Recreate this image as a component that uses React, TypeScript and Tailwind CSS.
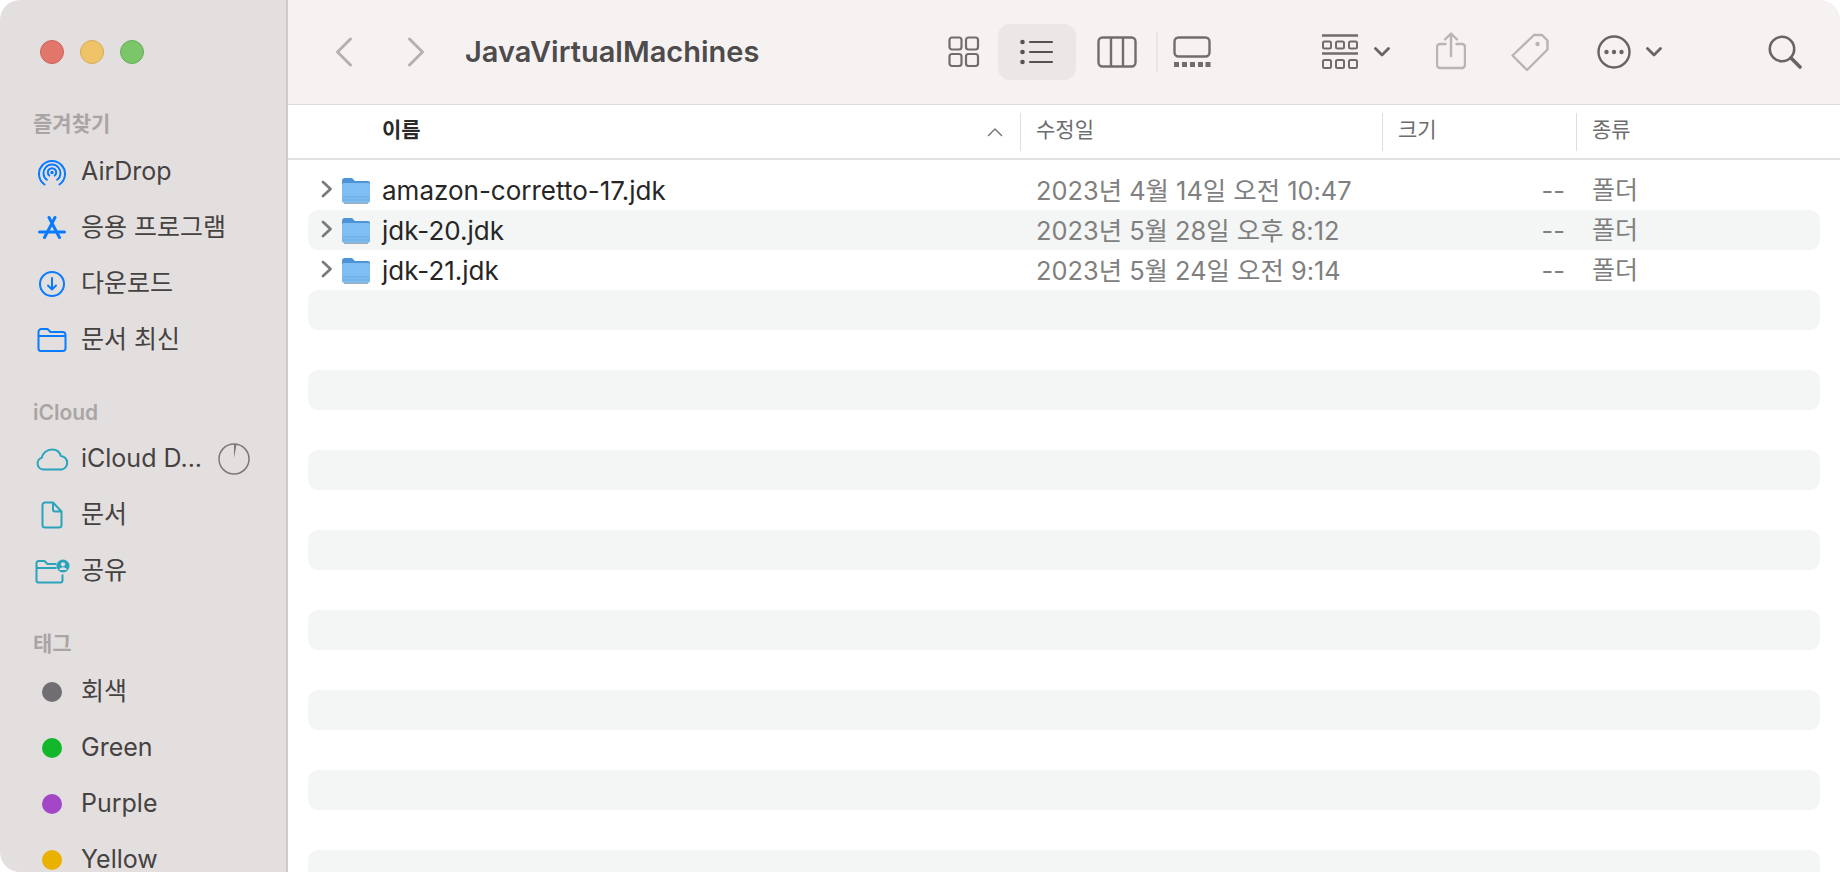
const KO = "font-['Inter','Noto_Sans_CJK_KR',sans-serif]";

const BLUE = "#0a7aff";
const TEAL = "#2aa3bd";

function AirDropIcon() {
  return (
    <svg width="28" height="27" viewBox="0 0 28 27" fill="none" stroke={BLUE} strokeWidth="2" strokeLinecap="round">
      <path d="M6.500 25.500a13 13 0 1 1 15 0" />
      <path d="M8.800 20.800a8.500 8.500 0 1 1 10.400 0" />
      <path d="M11.300 16.600a4.200 4.200 0 1 1 5.400 0" />
      <circle cx="14" cy="13.500" r="1.700" fill={BLUE} stroke="none" />
    </svg>
  );
}

function AppsIcon() {
  return (
    <svg width="28" height="24" viewBox="0 0 28 24" fill="none" stroke={BLUE} strokeLinecap="round">
      <path d="M11 1.500L21.500 21.500M17 1.500L6.500 21.500" strokeWidth="3" />
      <path d="M1.500 16h25" strokeWidth="3" />
    </svg>
  );
}

function DownloadIcon() {
  return (
    <svg width="28" height="28" viewBox="0 0 28 28" fill="none" stroke={BLUE} strokeWidth="2" strokeLinecap="round" strokeLinejoin="round">
      <circle cx="14" cy="14" r="12" />
      <path d="M14 8v11.500M10 15.500l4 4 4-4" />
    </svg>
  );
}

function FolderIcon({ color }: { color: string }) {
  return (
    <svg width="30" height="24" viewBox="0 0 30 24" fill="none" stroke={color} strokeWidth="2" strokeLinejoin="round">
      <path d="M1.500 4a3 3 0 0 1 3-3h6l3 3h12a3 3 0 0 1 3 3v13.500a2.500 2.500 0 0 1-2.500 2.500h-22a2.500 2.500 0 0 1-2.500-2.500z" />
      <path d="M1.500 8h27" />
    </svg>
  );
}

function CloudIcon() {
  return (
    <svg width="33" height="23" viewBox="0 0 33 23" fill="none" stroke={TEAL} strokeWidth="2" strokeLinejoin="round">
      <path d="M7.500 21.500a6 6 0 0 1-1.800-11.700C7 5 11 1.500 16 1.500c4.500 0 7.800 2.800 8.800 6.500a6.800 6.800 0 0 1 .7 13.500z" />
    </svg>
  );
}

function DocIcon() {
  return (
    <svg width="22" height="28" viewBox="0 0 22 28" fill="none" stroke={TEAL} strokeWidth="2" strokeLinejoin="round">
      <path d="M4 1.500h8l8.500 9V24a2.500 2.500 0 0 1-2.500 2.500H4A2.500 2.500 0 0 1 1.500 24V4A2.500 2.500 0 0 1 4 1.500z" />
      <path d="M12 1.500v7a2 2 0 0 0 2 2h6.500" />
    </svg>
  );
}

function SharedIcon() {
  return (
    <svg width="35" height="25" viewBox="0 0 35 25" fill="none" stroke={TEAL} strokeWidth="2" strokeLinejoin="round">
      <path d="M1.500 4a2 2 0 0 1 2-2h6l3 3h9" />
      <path d="M1.500 9h20" />
      <path d="M1.500 4v17.500a2 2 0 0 0 2 2h22a2 2 0 0 0 2-2v-6" />
      <circle cx="28" cy="7" r="6.500" fill={TEAL} stroke="none" />
      <circle cx="28" cy="5.300" r="2.100" fill="#e4dfdf" stroke="none" />
      <path d="M24 11c.7-1.800 2.200-2.700 4-2.700s3.300.9 4 2.700z" fill="#e4dfdf" stroke="none" />
    </svg>
  );
}

function ProgressIcon() {
  return (
    <svg width="32" height="32" viewBox="0 0 32 32" className="ml-auto mr-[36px]">
      <circle cx="16" cy="16" r="15" fill="none" stroke="#7c7878" strokeWidth="1.500" />
      <path d="M16 1l2.600.3L16 15z" fill="#7c7878" />
    </svg>
  );
}

function SmallChevron() {
  return (
    <svg width="16" height="10" viewBox="0 0 16 10" fill="none" stroke="#6a6464" strokeWidth="2.800" strokeLinecap="round" strokeLinejoin="round">
      <path d="M1.500 1.500L8 8l6.500-6.500" />
    </svg>
  );
}

function SidebarLabel({ children, className }: { children: string; className?: string }) {
  return <div className={`shrink-0 pl-[33px] text-[21px] leading-[28px] font-semibold text-[#aaa5a5] ${className ?? ""}`}>{children}</div>;
}

function SidebarItem({ icon, label, extra }: { icon: React.ReactNode; label: string; extra?: React.ReactNode }) {
  return (
    <div className="flex h-[56px] shrink-0 items-center">
      <div className="flex w-[81px] shrink-0 justify-center pl-[23px]">{icon}</div>
      <span className="text-[25px] text-[#454242]">{label}</span>
      {extra}
    </div>
  );
}

function TagDot({ color }: { color: string }) {
  return <span className={`block size-[20px] rounded-full ${color}`} />;
}

function Toolbar() {
  return (
    <div className="flex h-[105px] shrink-0 items-center border-b border-[#dcdadb] bg-[#f7f2f2]">
      <svg width="18" height="30" viewBox="0 0 18 30" fill="none" stroke="#b5b1b1" strokeWidth="3" strokeLinecap="round" strokeLinejoin="round" className="ml-[47px]">
        <path d="M15.500 2L2.500 15l13 13" />
      </svg>
      <svg width="18" height="30" viewBox="0 0 18 30" fill="none" stroke="#b5b1b1" strokeWidth="3" strokeLinecap="round" strokeLinejoin="round" className="ml-[54px]">
        <path d="M2.500 2l13 13-13 13" />
      </svg>
      <span className="ml-[40px] w-[483px] text-[29px] font-semibold text-[#4d4b4b]">JavaVirtualMachines</span>
      {/* view switch */}
      <svg width="32" height="32" viewBox="0 0 32 32" fill="none" stroke="#736c6c" strokeWidth="2.200">
        <rect x="1.500" y="1.500" width="12" height="12" rx="2.500" />
        <rect x="18" y="1.500" width="12" height="12" rx="2.500" />
        <rect x="1.500" y="18" width="12" height="12" rx="2.500" />
        <rect x="18" y="18" width="12" height="12" rx="2.500" />
      </svg>
      <div className="ml-[18px] flex h-[56px] w-[78px] items-center justify-center rounded-[12px] bg-[#ece7e7]">
        <svg width="34" height="28" viewBox="0 0 34 28" fill="none" stroke="#565252" strokeWidth="2.200" strokeLinecap="round">
          <path d="M10 4h22M10 14h22M10 24h22" />
          <circle cx="2.500" cy="4" r="2.300" fill="#565252" stroke="none" />
          <circle cx="2.500" cy="14" r="2.300" fill="#565252" stroke="none" />
          <circle cx="2.500" cy="24" r="2.300" fill="#565252" stroke="none" />
        </svg>
      </div>
      <svg width="40" height="32" viewBox="0 0 40 32" fill="none" stroke="#736c6c" strokeWidth="2.400" className="ml-[21px]">
        <rect x="1.500" y="1.500" width="37" height="29" rx="4" />
        <path d="M14 1.500v29M26 1.500v29" />
      </svg>
      <div className="ml-[19px] h-[40px] w-[2px] bg-[#ebe6e6]" />
      <svg width="38" height="32" viewBox="0 0 38 32" fill="none" stroke="#736c6c" strokeWidth="2.400" className="ml-[15px]">
        <rect x="1.500" y="1.500" width="35" height="19" rx="4" />
        <path d="M1 28.500h5M9 28.500h5M17 28.500h5M25 28.500h5M32.500 28.500h5" strokeWidth="5" />
      </svg>
      {/* group by */}
      <svg width="36" height="36" viewBox="0 0 36 36" fill="none" stroke="#736c6c" strokeWidth="2" className="ml-[111px]">
        <path d="M0 1.500h36M0 19.500h36" strokeWidth="2.400" />
        <rect x="1" y="7.500" width="8" height="7" rx="1.500" />
        <rect x="14" y="7.500" width="8" height="7" rx="1.500" />
        <rect x="27" y="7.500" width="8" height="7" rx="1.500" />
        <rect x="1" y="26" width="8" height="8" rx="1.500" />
        <rect x="14" y="26" width="8" height="8" rx="1.500" />
        <rect x="27" y="26" width="8" height="8" rx="1.500" />
      </svg>
      <div className="ml-[16px]"><SmallChevron /></div>
      {/* share */}
      <svg width="30" height="38" viewBox="0 0 30 38" fill="none" stroke="#b9b5b5" strokeWidth="2.400" strokeLinecap="round" strokeLinejoin="round" className="ml-[46px] -mt-[2px]">
        <path d="M15 24V2M9 7.500L15 1.500l6 6" />
        <path d="M9.500 12H4a3 3 0 0 0-3 3v18a3 3 0 0 0 3 3h22a3 3 0 0 0 3-3V15a3 3 0 0 0-3-3h-5.500" />
      </svg>
      {/* tag */}
      <svg width="38" height="38" viewBox="0 0 38 38" fill="none" stroke="#b9b5b5" strokeWidth="2.400" strokeLinejoin="round" className="ml-[45px]">
        <path d="M23 2h8l5.500 5.500v9L16 37 1.500 22.500z" />
        <circle cx="26.500" cy="11" r="2.200" fill="#b9b5b5" stroke="none" />
      </svg>
      {/* more */}
      <svg width="34" height="34" viewBox="0 0 34 34" fill="none" stroke="#696363" strokeWidth="2.400" className="ml-[48px]">
        <circle cx="17" cy="17" r="15.500" />
        <circle cx="9.500" cy="17" r="2.200" fill="#696363" stroke="none" />
        <circle cx="17" cy="17" r="2.200" fill="#696363" stroke="none" />
        <circle cx="24.500" cy="17" r="2.200" fill="#696363" stroke="none" />
      </svg>
      <div className="ml-[15px]"><SmallChevron /></div>
      {/* search */}
      <svg width="34" height="34" viewBox="0 0 34 34" fill="none" stroke="#696363" strokeWidth="2.600" strokeLinecap="round" className="ml-[106px]">
        <circle cx="14" cy="14" r="12.200" />
        <path d="M23 23l9 9" strokeWidth="3.600" />
      </svg>
    </div>
  );
}

function HeaderRow() {
  return (
    <div className="flex h-[55px] shrink-0 items-center border-b-2 border-[#e2e2e2] text-[21px] text-[#6d6d6d]">
      <div className="flex h-[38px] w-[733px] items-center justify-between border-r border-[#dedede] pb-[3px] pl-[94px] pr-[17px]">
        <span className="font-semibold text-[#2a2a2a]">이름</span>
        <svg width="16" height="10" viewBox="0 0 16 10" fill="none" stroke="#7a7a7a" strokeWidth="1.500" strokeLinecap="round" strokeLinejoin="round" className="mt-[3px]">
          <path d="M1.500 8.500L8 2l6.500 6.500" />
        </svg>
      </div>
      <div className="flex h-[38px] w-[362px] items-center border-r border-[#dedede] pb-[3px] pl-[15px]">수정일</div>
      <div className="flex h-[38px] w-[194px] items-center border-r border-[#dedede] pb-[3px] pl-[15px]">크기</div>
      <div className="flex h-[38px] items-center pb-[3px] pl-[15px]">종류</div>
    </div>
  );
}

function JdkFolder() {
  return (
    <svg width="30" height="28" viewBox="0 0 30 28" className="shrink-0">
      <path d="M1 5a3 3 0 0 1 3-3h7l3 3h13a2 2 0 0 1 2 2v4H1z" fill="#4d94d6" />
      <path d="M1 9a2 2 0 0 1 2-2h24a2 2 0 0 1 2 2v16a2 2 0 0 1-2 2H3a2 2 0 0 1-2-2z" fill="#7fbef2" />
      <path d="M1 21h28M1 24h28" stroke="#6aa9de" strokeWidth="1" />
      <path d="M3 27.300h24" stroke="#8b9bab" strokeWidth="1" />
    </svg>
  );
}

const files = [
  { name: "amazon-corretto-17.jdk", date: "2023년 4월 14일 오전 10:47" },
  { name: "jdk-20.jdk", date: "2023년 5월 28일 오후 8:12" },
  { name: "jdk-21.jdk", date: "2023년 5월 24일 오전 9:14" },
];

function FileRow({ name, date, striped }: { name?: string; date?: string; striped: boolean }) {
  return (
    <div className={`mx-[20px] flex h-[40px] shrink-0 items-center rounded-[10px] ${striped ? "bg-[#f4f5f5]" : ""}`}>
      {name && (
        <>
          <svg width="12" height="18" viewBox="0 0 12 18" fill="none" stroke="#7b7b7b" strokeWidth="2.800" strokeLinecap="round" strokeLinejoin="round" className="ml-[13px] -mt-[2px]">
            <path d="M2 2l7.500 7L2 16" />
          </svg>
          <div className="ml-[8px] -mt-[1px]"><JdkFolder /></div>
          <span className="ml-[11px] w-[654px] pt-[1px] text-[26px] text-[#262626]">{name}</span>
          <span className="w-[361px] pt-[2px] text-[25.4px] text-[#808080]">{date}</span>
          <span className="w-[168px] pt-[2px] text-right text-[25.5px] text-[#808080]">--</span>
          <span className="ml-[27px] pt-[2px] text-[25px] text-[#808080]">폴더</span>
        </>
      )}
    </div>
  );
}

export default function App() {
  return (
    <div className={`flex h-[872px] w-[1840px] overflow-hidden bg-white ${KO}`}>
      <aside className="flex w-[288px] shrink-0 flex-col overflow-hidden rounded-l-[20px] border-r-2 border-[#cfcaca] bg-[#e4dfdf]">
        <div className="flex h-[110px] shrink-0 items-start gap-[16px] pl-[40px] pt-[40px]">
          <span className="size-[24px] rounded-full border border-[#c9625a] bg-[#e2766a]" />
          <span className="size-[24px] rounded-full border border-[#d6aa55] bg-[#efc368]" />
          <span className="size-[24px] rounded-full border border-[#65ad58] bg-[#7cc66a]" />
        </div>
        <SidebarLabel className="mb-[6px]">즐겨찾기</SidebarLabel>
        <SidebarItem icon={<AirDropIcon />} label="AirDrop" />
        <SidebarItem icon={<AppsIcon />} label="응용 프로그램" />
        <SidebarItem icon={<DownloadIcon />} label="다운로드" />
        <SidebarItem icon={<FolderIcon color={BLUE} />} label="문서 최신" />
        <SidebarLabel className="mt-[31px] mb-[4px]">iCloud</SidebarLabel>
        <SidebarItem icon={<CloudIcon />} label="iCloud D..." extra={<ProgressIcon />} />
        <SidebarItem icon={<DocIcon />} label="문서" />
        <SidebarItem icon={<SharedIcon />} label="공유" />
        <SidebarLabel className="mt-[31px] mb-[6px]">태그</SidebarLabel>
        <SidebarItem icon={<TagDot color="bg-[#706d73]" />} label="회색" />
        <SidebarItem icon={<TagDot color="bg-[#12b72c]" />} label="Green" />
        <SidebarItem icon={<TagDot color="bg-[#a347c6]" />} label="Purple" />
        <SidebarItem icon={<TagDot color="bg-[#eab200]" />} label="Yellow" />
      </aside>
      <main className="flex min-w-0 flex-1 flex-col overflow-hidden rounded-tr-[20px]">
        <Toolbar />
        <HeaderRow />
        <div className="flex flex-col overflow-hidden pt-[10px]">
          {Array.from({ length: 18 }).map((_, i) => (
            <FileRow key={i} name={files[i]?.name} date={files[i]?.date} striped={i % 2 === 1} />
          ))}
        </div>
      </main>
    </div>
  );
}
